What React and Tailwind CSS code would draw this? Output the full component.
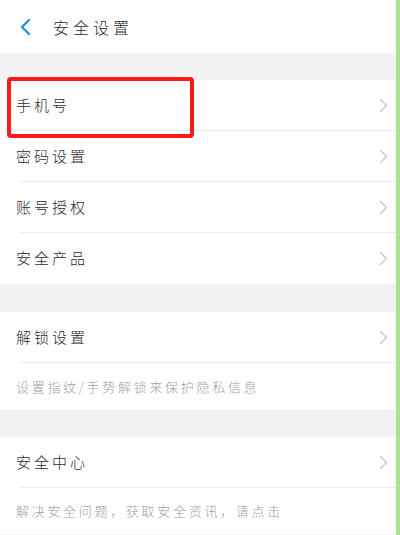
import React from "react";

const font = { fontFamily: '"Noto Sans CJK SC", "Noto Sans", sans-serif' };

function Chevron() {
    return (
        <svg width="9" height="15" viewBox="0 0 9 15" fill="none" className="shrink-0">
            <path d="M1.5 1.5 L7.5 7.5 L1.5 13.5" stroke="#c7c7c7" strokeWidth="1.4" strokeLinecap="round" strokeLinejoin="round" />
        </svg>
    );
}

function Row({ label, last }) {
    return (
        <div className="bg-white pl-[20px]">
            <div className={"h-[51px] flex items-center justify-between pr-[12px] " + (last ? "" : "border-b border-[#ececec]")}>
                <span className="-ml-[4px] text-[15px] tracking-[3px] text-[#2a2a2a] font-light">{label}</span>
                <Chevron />
            </div>
        </div>
    );
}

function Note({ text, height }) {
    return (
        <div className={"bg-white flex items-center pl-[16px] " + height}>
            <span className="text-[13px] tracking-[2.7px] text-[#a0a0a0] font-light">{text}</span>
        </div>
    );
}

export default function App() {
    return (
        <div className="relative w-[400px] h-[535px] overflow-hidden bg-[#f2f2f2]" style={font}>
            <div className="h-[53px] bg-white flex items-center pl-[19px]">
                <svg width="14" height="18" viewBox="0 0 14 18" fill="none">
                    <path d="M10 2 L3 9 L10 16" stroke="#1e8fe1" strokeWidth="2.2" strokeLinecap="round" strokeLinejoin="round" />
                </svg>
                <span className="ml-[20px] text-[16px] tracking-[4px] text-[#2a2a2a] font-light">安全设置</span>
            </div>

            <div className="h-[27px]" />
            <Row label="手机号" />
            <Row label="密码设置" />
            <Row label="账号授权" />
            <Row label="安全产品" last />

            <div className="h-[28px]" />
            <Row label="解锁设置" />
            <Note text="设置指纹/手势解锁来保护隐私信息" height="h-[47px]" />

            <div className="h-[27px]" />
            <Row label="安全中心" />
            <Note text="解决安全问题，获取安全资讯，请点击" height="h-[46px]" />

            <div className="absolute left-[7px] top-[77px] w-[187px] h-[61px] border-[4px] border-[#ff1a1a] rounded-[4px]" />
            <div className="absolute right-0 top-0 w-[4px] h-full bg-[#a9e294]" />
        </div>
    );
}
